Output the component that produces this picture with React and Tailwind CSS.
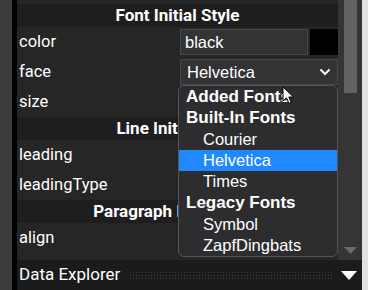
import React from 'react';

const roboto = { fontFamily: 'Roboto, "Liberation Sans", sans-serif' };
const arial = { fontFamily: '"Liberation Sans", Arial, sans-serif' };

function Header({ title }) {
    return (
        <div className="h-[23px] shrink-0 bg-[#1e1e1e] flex items-center justify-center text-[17px] font-bold text-white" style={roboto}>
            <span className="whitespace-nowrap">{title}</span>
        </div>
    );
}

function Row({ label, children }) {
    return (
        <div className="h-[30px] shrink-0 flex items-center bg-[#262626]">
            <div className="w-[163px] pl-[2px] text-[16.5px] text-white whitespace-nowrap" style={roboto}>{label}</div>
            <div className="flex-1 flex items-center h-full">{children}</div>
        </div>
    );
}

const menuItems = [
    { text: 'Added Fonts', bold: true },
    { text: 'Built-In Fonts', bold: true },
    { text: 'Courier' },
    { text: 'Helvetica', active: true },
    { text: 'Times' },
    { text: 'Legacy Fonts', bold: true },
    { text: 'Symbol' },
    { text: 'ZapfDingbats' },
];

function App() {
    return (
        <div className="w-[368px] h-[290px] flex overflow-hidden bg-[#262626]">
            <div className="w-[12px] bg-[#3d3d40]" />
            <div className="w-[5px] bg-black" />
            <div className="flex-1 flex flex-col">
                <div className="flex-1 flex min-h-0">
                    {/* properties panel */}
                    <div className="relative flex-1 flex flex-col overflow-hidden">
                        <div className="h-[4px] shrink-0 bg-[#262626]" />
                        <Header title="Font Initial Style" />
                        <Row label="color">
                            <div className="h-[26px] w-[128px] bg-[#333336] border border-[#474747] flex items-center px-[4px] text-[16.5px] text-white" style={arial}>black</div>
                            <div className="h-[26px] w-[28px] ml-[2px] bg-black" />
                        </Row>
                        <Row label="face">
                            <div className="h-[26px] w-[158px] bg-[#333336] border border-[#474747] flex items-center justify-between pl-[6px] pr-[6px] text-[16.5px] text-white" style={arial}>
                                <span>Helvetica</span>
                                <svg width="12" height="8" viewBox="0 0 12 8" fill="none" stroke="white" strokeWidth="2">
                                    <path d="M1.5 1.5 L6 6 L10.5 1.5" />
                                </svg>
                            </div>
                        </Row>
                        <Row label="size" />
                        <Header title="Line Initial Style" />
                        <Row label="leading" />
                        <Row label="leadingType" />
                        <Header title="Paragraph Initial Style" />
                        <Row label="align" />

                        {/* open dropdown */}
                        <div className="absolute left-[161px] top-[85px] w-[160px] border border-[#555558] rounded-[6px] bg-[#2d2d30] overflow-hidden text-[16.5px] text-white" style={arial}>
                            {menuItems.map((item) => (
                                <div
                                    key={item.text}
                                    className={
                                        'h-[21.3px] flex items-center whitespace-nowrap ' +
                                        (item.bold ? 'font-bold text-[17px] pl-[7px] ' : 'pl-[24px] ') +
                                        (item.active ? 'bg-[#2089ff]' : '')
                                    }
                                >
                                    {item.text}
                                </div>
                            ))}
                        </div>

                        {/* mouse pointer */}
                        <svg className="absolute left-[265px] top-[86px]" width="13" height="19" viewBox="0 0 13 19">
                            <path d="M1 1 L1 15 L4.5 11.8 L7 17.5 L9.2 16.5 L6.8 11 L11.5 11 Z" fill="white" stroke="black" strokeWidth="1" strokeLinejoin="round" />
                        </svg>
                    </div>

                    {/* scrollbar */}
                    <div className="w-[24px] bg-[#353535] flex flex-col items-start pl-[6px]">
                        <div className="w-[13px] h-[93px] bg-[#626262]" />
                        <div className="flex-1" />
                        <svg className="mb-[6px]" width="13" height="7" viewBox="0 0 13 7">
                            <path d="M0 0 L13 0 L6.5 7 Z" fill="#6a6a6a" />
                        </svg>
                    </div>
                </div>

                {/* bottom bar */}
                <div className="h-[30px] shrink-0 bg-[#1b1b1b] flex items-center pl-[2px] pr-[5px]">
                    <span className="text-[17px] text-white whitespace-nowrap" style={roboto}>Data Explorer</span>
                    <div className="flex-1 ml-[9px] mr-[8px] h-[9px] bg-[radial-gradient(#3d3d3d_0.8px,transparent_1px)] bg-[length:3px_3px]" />
                    <svg width="16" height="9" viewBox="0 0 16 9">
                        <path d="M0 0 L16 0 L8 9 Z" fill="white" />
                    </svg>
                </div>
            </div>
            <div className="w-[6px] bg-[#e2e2e2]" />
        </div>
    );
}

export default App;
